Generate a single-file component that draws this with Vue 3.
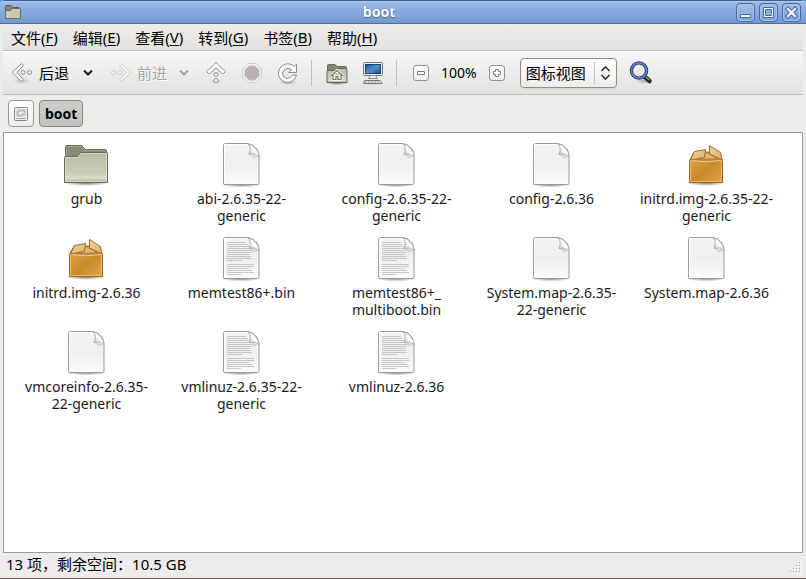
<script setup>
import { ref } from 'vue'

const menus = [
  { name: '文件', key: 'F' },
  { name: '编辑', key: 'E' },
  { name: '查看', key: 'V' },
  { name: '转到', key: 'G' },
  { name: '书签', key: 'B' },
  { name: '帮助', key: 'H' }
]

const files = [
  { lines: ['grub'], kind: 'folder' },
  { lines: ['abi-2.6.35-22-', 'generic'], kind: 'blank' },
  { lines: ['config-2.6.35-22-', 'generic'], kind: 'blank' },
  { lines: ['config-2.6.36'], kind: 'blank' },
  { lines: ['initrd.img-2.6.35-22-', 'generic'], kind: 'package' },
  { lines: ['initrd.img-2.6.36'], kind: 'package' },
  { lines: ['memtest86+.bin'], kind: 'text' },
  { lines: ['memtest86+_', 'multiboot.bin'], kind: 'text' },
  { lines: ['System.map-2.6.35-', '22-generic'], kind: 'blank' },
  { lines: ['System.map-2.6.36'], kind: 'blank' },
  { lines: ['vmcoreinfo-2.6.35-', '22-generic'], kind: 'blank' },
  { lines: ['vmlinuz-2.6.35-22-', 'generic'], kind: 'text' },
  { lines: ['vmlinuz-2.6.36'], kind: 'text' }
]

const view = ref('icons')
</script>

<template>
  <div class="window">
    <svg class="defs" width="0" height="0" aria-hidden="true">
      <defs>
        <linearGradient id="folderFront" x1="0" y1="0" x2="0" y2="1">
          <stop offset="0" stop-color="#b9bca4" />
          <stop offset="0.7" stop-color="#cccdb9" />
          <stop offset="0.85" stop-color="#dcddcf" />
          <stop offset="1" stop-color="#a9ab92" />
        </linearGradient>
        <linearGradient id="paper" x1="0" y1="0" x2="0" y2="1">
          <stop offset="0" stop-color="#f4f4f3" />
          <stop offset="0.5" stop-color="#eeefee" />
          <stop offset="1" stop-color="#fbfbfb" />
        </linearGradient>
        <linearGradient id="curl" x1="0" y1="1" x2="1" y2="0">
          <stop offset="0" stop-color="#a3a5a2" />
          <stop offset="0.25" stop-color="#d5d6d4" />
          <stop offset="0.5" stop-color="#ffffff" />
          <stop offset="1" stop-color="#d0d1ce" />
        </linearGradient>
        <linearGradient id="carton" x1="0" y1="0" x2="1" y2="1">
          <stop offset="0" stop-color="#dfa850" />
          <stop offset="0.55" stop-color="#c98b29" />
          <stop offset="1" stop-color="#dfa54b" />
        </linearGradient>
        <linearGradient id="flap" x1="0" y1="0" x2="1" y2="1">
          <stop offset="0" stop-color="#f0d6a8" />
          <stop offset="1" stop-color="#dcae68" />
        </linearGradient>
        <linearGradient id="screen" x1="0" y1="0" x2="1" y2="1">
          <stop offset="0" stop-color="#1d4d8c" />
          <stop offset="0.5" stop-color="#5a8dcb" />
          <stop offset="1" stop-color="#1c4a88" />
        </linearGradient>
        <radialGradient id="shade">
          <stop offset="0" stop-color="#000000" stop-opacity="0.5" />
          <stop offset="1" stop-color="#000000" stop-opacity="0" />
        </radialGradient>
      </defs>
    </svg>

    <header class="titlebar">
      <svg class="app-icon" width="16" height="14" viewBox="0 0 16 14" aria-hidden="true">
        <path d="M.5 12.5V1.5Q.5.5 1.5.5H6L8 2.5H13.5Q14.5 2.5 14.5 3.5V12.5Z" fill="#858771" stroke="#55584a" />
        <path d="M.5 13.5V5.5H5.5L7 3.5H14.5Q15.5 3.5 15.5 4.5V13.5Z" fill="#c8cab5" stroke="#686b59" />
      </svg>
      <h1>boot</h1>
      <div class="window-buttons">
        <button type="button" aria-label="最小化">
          <svg width="17" height="17" viewBox="0 0 17 17"><path d="M3.5 10.5H13.5V13.5H3.5Z" fill="#f2f6fc" stroke="#456a9e" /></svg>
        </button>
        <button type="button" aria-label="最大化">
          <svg width="17" height="17" viewBox="0 0 17 17">
            <path d="M3.5 3.5H13.5V13.5H3.5Z" fill="#f2f6fc" stroke="#456a9e" />
            <path d="M5.500 5.500H11.500V11.500H5.500Z" fill="#8faedb" stroke="#456a9e" />
          </svg>
        </button>
        <button type="button" aria-label="关闭">
          <svg width="17" height="17" viewBox="0 0 17 17">
            <path d="M5 5L12 12M12 5L5 12" stroke="#456a9e" stroke-width="4.5" stroke-linecap="square" />
            <path d="M5 5L12 12M12 5L5 12" stroke="#f2f6fc" stroke-width="2.4" stroke-linecap="square" />
          </svg>
        </button>
      </div>
    </header>

    <nav class="menubar">
      <button v-for="menu in menus" :key="menu.key" type="button">{{ menu.name }}(<u>{{ menu.key }}</u>)</button>
    </nav>

    <div class="toolbar">
      <div class="group back">
        <button type="button" class="labelled">
          <svg width="22" height="24" viewBox="0 0 22 24" aria-hidden="true">
            <ellipse cx="11" cy="20" rx="9" ry="3" fill="url(#shade)" opacity=".35" />
            <path d="M10.5 2.5L1 11.5L10.5 20.5L12.5 18.5L6 11.5L12.5 4.5Z" fill="#f6f6f5" stroke="#8c8e8a" stroke-linejoin="round" />
            <circle cx="12" cy="11.500" r="2" fill="#fafafa" stroke="#8c8e8a" />
            <circle cx="18.500" cy="11.500" r="2" fill="#fafafa" stroke="#8c8e8a" />
          </svg>
          <span>后退</span>
        </button>
        <button type="button" aria-label="后退历史">
          <svg width="10" height="8" viewBox="0 0 10 8"><path d="M1 1.500L5 5.500L9 1.500" fill="none" stroke="#1a1a1a" stroke-width="2" /></svg>
        </button>
      </div>
      <div class="group forward">
        <button type="button" class="labelled" disabled>
          <svg width="22" height="24" viewBox="0 0 22 24" aria-hidden="true">
            <path d="M11.500 2.500L21 11.500L11.500 20.500L9.500 18.500L16 11.500L9.500 4.500Z" fill="#f3f3f2" stroke="#c9cac7" stroke-linejoin="round" />
            <circle cx="10" cy="11.500" r="2" fill="#f5f5f4" stroke="#c9cac7" />
            <circle cx="3.500" cy="11.500" r="2" fill="#f5f5f4" stroke="#c9cac7" />
          </svg>
          <span>前进</span>
        </button>
        <button type="button" aria-label="前进历史" disabled>
          <svg width="10" height="8" viewBox="0 0 10 8"><path d="M1 1.500L5 5.500L9 1.500" fill="none" stroke="#a3a3a1" stroke-width="2" /></svg>
        </button>
      </div>
      <div class="group actions">
        <button type="button" aria-label="向上">
          <svg width="22" height="24" viewBox="0 0 22 24">
            <ellipse cx="11" cy="20.500" rx="6" ry="2.500" fill="url(#shade)" opacity=".4" />
            <path d="M11 1.500L1.500 10.500L3.500 12.500Q4.500 13 5.500 12L11 7L16.500 12Q17.500 13 18.500 12.500L20.500 10.500Z" fill="#f8f8f7" stroke="#8c8e8a" stroke-linejoin="round" />
            <circle cx="11" cy="13.500" r="2" fill="#fafafa" stroke="#8c8e8a" />
            <circle cx="11" cy="19.500" r="2" fill="#fafafa" stroke="#8c8e8a" />
          </svg>
        </button>
        <button type="button" aria-label="停止" disabled>
          <svg width="22" height="24" viewBox="0 0 22 24">
            <path d="M7 2.500H15L20.500 8V16L15 21.500H7L1.500 16V8Z" fill="#efefee" stroke="#cfcfcd" />
            <path d="M8 5H14L18 9V15L14 19H8L4 15V9Z" fill="#b9b2b2" stroke="#c5c1c0" />
          </svg>
        </button>
        <button type="button" aria-label="重新载入">
          <svg width="22" height="24" viewBox="0 0 22 24">
            <ellipse cx="11" cy="21.500" rx="9" ry="2.500" fill="url(#shade)" opacity=".5" />
            <path transform="translate(0 1)" d="M19.500 2V10.500H11.500L14.500 7.500Q11 5 7.500 7.500Q4 11 6.500 14.500Q9.500 18 13.500 15.500Q15 14.500 15.500 13H19.500Q18.500 17.500 14.500 19.500Q8.500 22 3.800 17.500Q-.5 12 3 6Q8 -.5 15.500 3Q16.500 3.500 17 4.500Z" fill="#fafafa" stroke="#8c8e8a" stroke-linejoin="round" />
          </svg>
        </button>
      </div>
      <div class="group places">
        <button type="button" aria-label="主文件夹">
          <svg width="22" height="24" viewBox="0 0 22 24">
            <ellipse cx="11" cy="22" rx="11" ry="2" fill="url(#shade)" />
            <path d="M1.500 20V4.500Q1.500 3.500 2.500 3.500H9L11 5.500H19.500Q20.500 5.500 20.500 6.500V20Z" fill="#858771" stroke="#686b59" />
            <path d="M1 21.500V9.500H9L10.500 7.500H20Q21 7.500 21 8.500V21.500Z" fill="url(#folderFront)" stroke="#686b59" />
            <path d="M5 15L11 9.500L17 15M7 14V18.500H10V15.500H12V18.500H15V14" fill="none" stroke="#f1f2e8" stroke-width="3" />
            <path d="M5 15L11 9.500L17 15M7 14V18.500H10V15.500H12V18.500H15V14" fill="none" stroke="#75776a" stroke-width="1.200" />
          </svg>
        </button>
        <button type="button" aria-label="计算机">
          <svg width="22" height="24" viewBox="0 0 22 24">
            <ellipse cx="11" cy="22" rx="11" ry="2" fill="url(#shade)" opacity=".6" />
            <rect x="1.500" y="1.500" width="19" height="13" rx="1" fill="#eeeeec" stroke="#72746f" />
            <rect x="3.500" y="3.500" width="15" height="9" fill="url(#screen)" stroke="#17407b" />
            <path d="M8.500 14.500H13.500L15.500 17.500H6.500Z" fill="#ededeb" stroke="#888a85" />
            <path d="M2.500 19.500H18L20 22.500H1.500Z" fill="#e3e4e1" stroke="#777974" />
            <path d="M3 21H18" stroke="#999b96" stroke-dasharray="2 1" />
          </svg>
        </button>
      </div>
      <div class="group zoom">
        <button type="button" class="zoom-button" aria-label="缩小">
          <svg width="14" height="14" viewBox="0 0 14 14"><path d="M3.500 5.500H10.500V8.500H3.500Z" fill="#fff" stroke="#7b7d79" /></svg>
        </button>
        <button type="button" class="zoom-level">100%</button>
        <button type="button" class="zoom-button" aria-label="放大">
          <svg width="14" height="14" viewBox="0 0 14 14"><path d="M5.500 3.500H8.500V5.500H10.500V8.500H8.500V10.500H5.500V8.500H3.500V5.500H5.500Z" fill="#fff" stroke="#7b7d79" /></svg>
        </button>
      </div>
      <div class="view-select">
        <select v-model="view" aria-label="视图">
          <option value="icons">图标视图</option>
          <option value="list">列表视图</option>
        </select>
        <svg width="10" height="14" viewBox="0 0 10 14" aria-hidden="true"><path d="M1 5L5 1L9 5M1 9L5 13L9 9" fill="none" stroke="#2a2a2a" stroke-width="1.500" /></svg>
      </div>
      <button type="button" class="search" aria-label="搜索">
        <svg width="24" height="24" viewBox="0 0 24 24">
          <ellipse cx="15" cy="20" rx="8" ry="3" fill="url(#shade)" opacity=".5" />
          <path d="M16 16L20.500 20" stroke="#282825" stroke-width="4.500" stroke-linecap="round" />
          <path d="M16.500 15.800L20.500 19" stroke="#8d8e86" stroke-width="1.200" />
          <circle cx="10" cy="9.500" r="7.600" fill="#e8eaee" stroke="#243a73" stroke-width="3.400" />
          <circle cx="10" cy="9.500" r="7.600" fill="none" stroke="#6582ca" stroke-width="1.500" />
          <path d="M5.500 9Q6 5 10 4.500Q8 7 6 10Z" fill="#fff" />
        </svg>
      </button>
    </div>

    <div class="pathbar">
      <button type="button" class="root" aria-label="文件系统">
        <svg width="16" height="16" viewBox="0 0 16 16">
          <rect x="1.500" y="1.500" width="13" height="13" rx="1" fill="#efefee" stroke="#858783" />
          <rect x="3" y="3" width="10" height="8" rx="3" fill="#cfd0ce" />
          <path d="M4.500 8.500Q5 4.500 9 4.500Q12 4.500 11.500 6.500Q10 9.500 5 9.500Z" fill="#eeeeed" stroke="#a6a8a4" />
          <path d="M3 12.500H13" stroke="#a6a8a4" />
        </svg>
      </button>
      <button type="button" class="current">boot</button>
    </div>

    <main class="files">
      <a v-for="file in files" :key="file.lines.join('')" href="#" class="file">
        <svg width="48" height="48" viewBox="1 0 48 48" aria-hidden="true">
          <template v-if="file.kind === 'folder'">
            <ellipse cx="24" cy="42" rx="23" ry="3" fill="url(#shade)" />
            <path d="M3.500 39V5.500Q3.500 4.500 4.500 4.500H19.500L23.500 8.500H43.500Q44.500 8.500 44.500 9.500V39Z" fill="#878a74" stroke="#686b59" />
            <path d="M4.500 15V5.500H19L23 9.500H43.500" fill="none" stroke="#a4a692" />
            <path d="M2.500 41.500V16.500Q2.500 15.500 3.500 15.500H15Q16 15.500 16.500 14.500L18 12.500Q18.500 11.500 20 11.500H44.500Q45.500 11.500 45.500 12.500V41.500Z" fill="url(#folderFront)" stroke="#65685a" />
            <path d="M3.500 40.500V16.500H16L19 12.500H44.500V40.500Z" fill="none" stroke="#e4e5d9" stroke-opacity=".7" />
          </template>
          <template v-else-if="file.kind === 'package'">
            <ellipse cx="24" cy="42" rx="20" ry="3" fill="url(#shade)" />
            <path d="M7.500 19.500L11.500 12L24 11L37 12L40.500 19.500V41.500H7.500Z" fill="url(#carton)" stroke="#9a671c" />
            <path d="M10 18L23 13H27L38 18L39 19.500H9Z" fill="#b98543" />
            <path d="M20 18L24 12L34 17Z" fill="#e3b671" />
            <path d="M8.500 19.500Q24 22 39.500 19.500" fill="none" stroke="#efcd94" />
            <path d="M8.500 40.500V19.500M39.500 19.500V40.500H8.500" fill="none" stroke="#e8b86c" />
            <path d="M12.500 10.500L23.500 8.500L22.500 16.500L8.500 19Z" fill="url(#flap)" stroke="#a36e20" />
            <path d="M27.500 4.500L38.500 11.500L40 19L27.500 13Z" fill="url(#flap)" stroke="#a36e20" />
          </template>
          <template v-else>
            <ellipse cx="24" cy="43.500" rx="20" ry="3" fill="url(#shade)" />
            <path d="M6.500 4.500Q6.500 2.500 8.500 2.500H31Q36 3 40 8Q42 11.500 42 15V42Q42 43.500 40.500 43.500H8Q6.500 43.500 6.500 42Z" fill="url(#paper)" stroke="#999b98" />
            <path d="M7.500 42.500V3.500H30" fill="none" stroke="#ffffff" />
            <g v-if="file.kind === 'text'" stroke="#c5c6c5">
              <path d="M10 7.500H29M10 9.500H31M10 11.500H32M10 13.500H33M10 15.500H35M10 17.500H35M10 19.500H33M10 21.500H34M10 23.500H35M10 25.500H25M10 29.500H37M10 31.500H37M10 33.500H32M10 35.500H35M10 37.500H37M10 39.500H24" />
            </g>
            <path d="M32 13L41 15.500L37 17.500Z" fill="#000" opacity=".12" />
            <path d="M31 3Q35 6 32 13.500Q38 11.500 42 15.500Q42 11 39 7.500Q36 3.500 31 3Z" fill="url(#curl)" stroke="#a1a3a0" stroke-width=".8" />
          </template>
        </svg>
        <span><template v-for="(line, i) in file.lines" :key="i"><br v-if="i">{{ line }}</template></span>
      </a>
    </main>

    <footer class="statusbar">
      <span>13 项，剩余空间：10.5 GB</span>
      <svg width="12" height="12" viewBox="0 0 12 12" aria-hidden="true">
        <g fill="#a5a29e">
          <path d="M9 0h1v1h-1zM6 3h1v1h-1zM9 3h1v1h-1zM3 6h1v1h-1zM6 6h1v1h-1zM9 6h1v1h-1zM0 9h1v1h-1zM3 9h1v1h-1zM6 9h1v1h-1zM9 9h1v1h-1z" />
        </g>
        <path fill="#fff" d="M10 1h1v1h-1zM7 4h1v1h-1zM10 4h1v1h-1zM4 7h1v1h-1zM7 7h1v1h-1zM10 7h1v1h-1zM1 10h1v1h-1zM4 10h1v1h-1zM7 10h1v1h-1zM10 10h1v1h-1z" />
      </svg>
    </footer>
  </div>
</template>

<style>
body {
  background: #35a9e8;
}
</style>

<style scoped>
* {
  box-sizing: border-box;
}

.window {
  display: flex;
  flex-direction: column;
  min-height: 100vh;
  background: #edeceb;
  color: #1a1a1a;
  font-family: "Noto Sans", "Noto Sans CJK SC", sans-serif;
  font-size: 15px;
  border-bottom: 1px solid #6f6965;
  border-radius: 5px 5px 0 0;
  overflow: hidden;
}

.defs {
  position: absolute;
}

button {
  display: flex;
  align-items: center;
  justify-content: center;
  padding: 0;
  border: 0;
  background: none;
  color: #000;
  font: inherit;
}

svg {
  flex: none;
  display: block;
}

.titlebar {
  display: grid;
  grid-template-columns: 22px 1fr 70px;
  align-items: center;
  height: 24px;
  padding: 0 5px;
  background: linear-gradient(#9dbce8, #86a9dc 50%, #7299cf);
  border-top: 1px solid #41608f;
  border-bottom: 1px solid #4a6fa5;
  box-shadow: inset 0 1px #adc8ee;
}

h1 {
  margin: 0;
  color: #fff;
  font-size: 14px;
  line-height: 20px;
  text-align: center;
  text-shadow: 0 1px 1px #3f5f90, 0 0 1px #3f5f90;
}

.window-buttons {
  display: flex;
  justify-content: flex-end;
  gap: 4px;
}

.window-buttons button {
  width: 19px;
  height: 19px;
  border: 1px solid #456a9e;
  border-radius: 4px;
  background: linear-gradient(#a3c0e9, #7fa3d8);
  box-shadow: inset 0 0 0 1px #a9c4eb;
}

.menubar {
  display: flex;
  gap: 15px;
  height: 27px;
  margin: 0 3px;
  padding: 0 8px;
  background: linear-gradient(#edeceb, #e3e2e0);
  border-bottom: 1px solid #bfbdba;
}

u {
  text-underline-offset: 2px;
}

.toolbar {
  display: flex;
  align-items: center;
  height: 44px;
  margin: 0 3px;
  padding: 0 8px;
  background: linear-gradient(#f6f6f5, #e3e2e0);
  border-top: 1px solid #fff;
  border-bottom: 1px solid #bfbdba;
}

.group {
  display: flex;
  align-items: center;
}

.back {
  gap: 14px;
  margin-right: 17px;
}

.forward {
  gap: 12px;
  margin-right: 16px;
}

.labelled {
  gap: 6px;
}

.forward .labelled {
  gap: 5px;
}

.labelled span,
.zoom-level {
  padding-bottom: 2px;
}

button:disabled {
  color: #a3a3a1;
  text-shadow: 1px 1px #fff;
}

.actions {
  gap: 14px;
  padding-right: 12px;
}

.places {
  gap: 14px;
  padding: 0 12px 0 14px;
}

.zoom {
  gap: 12px;
  padding: 0 15px 0 16px;
}

.places,
.zoom {
  height: 26px;
  border-left: 1px solid #bfbdba;
}

.zoom-button {
  width: 16px;
  height: 16px;
  border: 1px solid #92948f;
  border-radius: 3px;
  background: linear-gradient(#fff, #ededec);
}

.zoom-level {
  font-size: 14px;
}

.view-select {
  display: grid;
  grid-template-columns: 73px 22px;
  align-items: center;
  height: 30px;
  border: 1px solid #8f8c88;
  border-radius: 4px;
  background: linear-gradient(#fff, #eeedec);
  box-shadow: 0 1px 1px #d4d2cf;
}

select {
  grid-area: 1 / 1 / 2 / 3;
  height: 28px;
  padding: 0 0 0 5px;
  border: 0;
  background: none;
  color: #000;
  font: inherit;
  appearance: none;
}

.view-select svg {
  grid-area: 1 / 2 / 2 / 3;
  width: 22px;
  height: 22px;
  padding: 4px 0;
  border-left: 1px solid #c4c2bf;
  pointer-events: none;
}

.search {
  margin-left: 12px;
}

.pathbar {
  display: flex;
  align-items: center;
  gap: 5px;
  height: 37px;
  padding: 0 8px;
}

.pathbar button {
  height: 27px;
  border: 1px solid #9b9893;
  border-radius: 4px;
}

.pathbar .root {
  width: 26px;
  background: linear-gradient(#fff, #eeedec);
}

.pathbar .current {
  padding: 0 5px;
  background: linear-gradient(#cfcdcb, #c4c2bf);
  border-color: #8b8883;
  font-size: 14px;
  font-weight: bold;
}

.files {
  display: grid;
  flex: 1;
  grid-template-columns: repeat(auto-fill, 155px);
  grid-auto-rows: 94px;
  align-content: start;
  margin: 0 3px;
  padding: 8px 5px;
  border: 1px solid #9b9893;
  background: #fff;
}

.file {
  display: flex;
  flex-direction: column;
  align-items: center;
  gap: 1px;
  color: #1a1a1a;
  font-size: 14px;
  line-height: 17px;
  text-align: center;
  text-decoration: none;
  white-space: nowrap;
}

.statusbar {
  display: flex;
  align-items: center;
  justify-content: space-between;
  height: 25px;
  padding: 0 4px 4px 6px;
  color: #000;
}

.statusbar svg {
  align-self: flex-end;
}
</style>
